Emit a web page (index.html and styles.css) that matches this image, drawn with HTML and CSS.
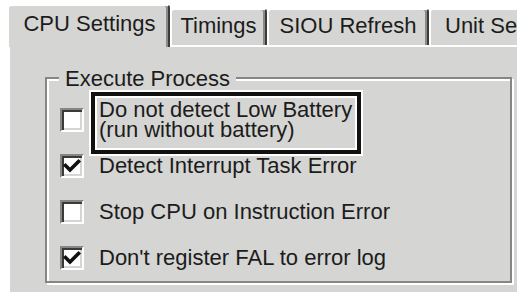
FILE: index.html
```html
<!DOCTYPE html>
<html>
<head>
<meta charset="utf-8">
<link rel="stylesheet" href="styles.css">
</head>
<body>
<div class="dialog">
  <div class="tabstrip">
    <div class="tab tab-active tab-cpu">CPU Settings</div>
    <div class="tab tab-timings">Timings</div>
    <div class="tab tab-siou">SIOU Refresh</div>
    <div class="tab tab-unit">Unit Se</div>
  </div>
  <div class="panel">
    <div class="group">
      <div class="group-title">Execute Process</div>
      <div class="options">
        <div class="option">
          <span class="checkbox"></span>
          <span class="option-label option-label-marked">Do not detect Low Battery<br>(run without battery)</span>
        </div>
        <div class="option">
          <span class="checkbox"><svg class="check" viewBox="0 0 20 20"><path d="M3.5 9.5 L8 14 L16.5 5.5"/></svg></span>
          <span class="option-label">Detect Interrupt Task Error</span>
        </div>
        <div class="option">
          <span class="checkbox"></span>
          <span class="option-label">Stop CPU on Instruction Error</span>
        </div>
        <div class="option">
          <span class="checkbox"><svg class="check" viewBox="0 0 20 20"><path d="M3.5 9.5 L8 14 L16.5 5.5"/></svg></span>
          <span class="option-label">Don't register FAL to error log</span>
        </div>
      </div>
    </div>
  </div>
</div>
</body>
</html>
```

FILE: styles.css
```css
html, body {
  margin: 0;
  background: #fff;
}
body {
  width: 517px;
  height: 292px;
  overflow: hidden;
  font-family: "Liberation Sans", Arial, sans-serif;
  font-size: 22px;
  line-height: 20px;
  color: #1c1c1c;
}
.dialog {
  padding: 4px 0 0 7px;
}
.tabstrip {
  display: flex;
  align-items: flex-end;
  height: 41px;
  position: relative;
  z-index: 1;
}
.tab {
  flex: none;
  box-sizing: border-box;
  height: 37px;
  padding-top: 6px;
  text-align: center;
  white-space: nowrap;
  overflow: hidden;
  background: #d5d5d3;
  border-top: 2px solid #fff;
  border-left: 2px solid #fff;
  border-right: 2px solid #3c3c3c;
  box-shadow: inset -2px 0 0 #8a8a8a;
  border-radius: 4px 4px 0 0;
}
.tab-active {
  height: 43px;
  margin-bottom: -2px;
  padding-top: 8px;
}
.tab-cpu { width: 163px; padding-left: 2px; }
.tab-timings { width: 97px; }
.tab-siou { width: 162px; }
.tab-unit { width: 88px; text-align: left; padding-left: 14px; border-right: 0; box-shadow: none; border-radius: 4px 0 0 0; }
.panel {
  margin-left: 1px;
  box-sizing: border-box;
  width: 509px;
  height: 247px;
  padding: 30px 0 0 35px;
  background: #d5d5d3;
  border-top: 2px solid #fff;
  border-left: 2px solid #fff;
}
.group {
  position: relative;
  box-sizing: border-box;
  width: 467px;
  height: 206px;
  border: 2px solid #868686;
  box-shadow: inset 2px 2px 0 #fff, 2px 2px 0 #fff;
}
.group-title {
  position: absolute;
  left: 12px;
  top: -10px;
  padding: 0 6px;
  background: #d5d5d3;
}
.options {
  display: flex;
  flex-direction: column;
  padding: 18px 0 0 13px;
}
.option {
  display: flex;
  align-items: center;
  height: 46px;
}
.checkbox {
  flex: none;
  position: relative;
  box-sizing: border-box;
  width: 24px;
  height: 24px;
  background: #fff;
  border: 2px solid;
  border-color: #868686 #fff #fff #868686;
  box-shadow: inset 2px 2px 0 #3a3a3a, inset -2px -2px 0 #d5d5d3;
}
.check {
  position: absolute;
  left: 0;
  top: 0;
  width: 20px;
  height: 20px;
  fill: none;
  stroke: #111;
  stroke-width: 3.6;
  stroke-linecap: square;
  stroke-linejoin: miter;
}
.option-label {
  margin-left: 15px;
  white-space: nowrap;
}
.option-label-marked {
  margin: -5px 0 -11px 7px;
  padding: 4px 5px 10px 4px;
  border: 4px solid #111;
  line-height: 20px;
  box-shadow: 0 0 0 2px #fff, inset 0 0 0 2px #fff;
}
```
